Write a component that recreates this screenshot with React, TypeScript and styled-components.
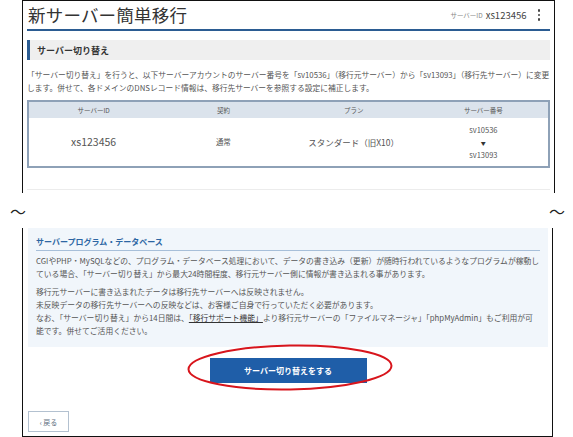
import styled, { createGlobalStyle } from 'styled-components';

const GlobalStyle = createGlobalStyle`
	html, body {
		margin: 0;
		padding: 0;
		background: #fff;
	}
	body {
		font-family: "Noto Sans CJK JP", "Noto Sans", sans-serif;
		color: #444;
	}
`;

const Page = styled.div`
	width: 573px;
	height: 437px;
	display: flex;
	flex-direction: column;
	overflow: hidden;
`;

const TopFrame = styled.section`
	margin: 0 18px 0 22px;
	border: 1px solid #111;
	border-bottom: none;
	padding: 0 4px 3px 4px;
`;

const Header = styled.header`
	height: 28px;
	display: flex;
	align-items: center;
	justify-content: space-between;
	border-bottom: 2px solid #2b5c92;
	padding: 0 10px 0 1px;
`;

const Title = styled.h1`
	margin: 0 0 1px;
	font-size: 17.5px;
	font-weight: 400;
	color: #333;
	letter-spacing: 0.2px;
`;

const Meta = styled.div`
	display: flex;
	align-items: center;
	gap: 3px;
`;

const MetaLabel = styled.span`
	font-size: 6.5px;
	color: #888;
`;

const MetaValue = styled.span`
	font-size: 9.5px;
	color: #444;
	margin-right: 8px;
`;

const Kebab = styled.span`
	display: flex;
	flex-direction: column;
	gap: 2px;
	i {
		width: 2.5px;
		height: 2.5px;
		border-radius: 50%;
		background: #444;
	}
`;

const SectionHead = styled.h2`
	margin: 9px 0 0;
	height: 20px;
	display: flex;
	align-items: center;
	background: #efefef;
	border-left: 3px solid #2b5c92;
	padding-left: 7px;
	font-size: 9px;
	font-weight: 700;
	color: #333;
`;

const Lead = styled.p`
	margin: 8px 0 0;
	font-size: 7.75px;
	line-height: 13px;
	color: #555;
	white-space: nowrap;
`;

const Table = styled.table`
	margin-top: 6px;
	width: 100%;
	border-collapse: collapse;
	border: 2px solid #8ea1b7;
	table-layout: fixed;
	th {
		height: 16px;
		padding: 0;
		background: #dbe3ec;
		font-size: 6.5px;
		font-weight: 400;
		color: #555;
	}
	td {
		height: 48px;
		padding: 0;
		text-align: center;
		color: #555;
	}
`;

const Cell = styled.td<{ $size: number }>`
	font-size: ${(p) => p.$size}px;
	line-height: 12px;
`;

const Arrow = styled.span`
	font-size: 5px;
	color: #333;
`;

const Divider = styled.div`
	margin-top: 21px;
	border-top: 1px solid #ececec;
`;

const CutRow = styled.div`
	height: 35px;
	display: flex;
	align-items: center;
	justify-content: space-between;
	padding: 0 8px 0 10px;
	font-size: 16px;
	color: #222;
`;

const BottomFrame = styled.section`
	flex: 1;
	margin: 0 20px 0 22px;
	border: 1px solid #111;
	border-top: none;
	padding: 0 4px 3px 5px;
	display: flex;
	flex-direction: column;
`;

const InfoBox = styled.div`
	background: #f1f6fb;
	padding: 8px 8px 10px;
`;

const InfoHead = styled.h3`
	margin: 0;
	font-size: 8px;
	line-height: 12px;
	font-weight: 700;
	color: #2d66a3;
	padding-bottom: 2px;
	border-bottom: 1px solid #a7bfd9;
`;

const InfoText = styled.p<{ $gap: number }>`
	margin: ${(p) => p.$gap}px 0 0;
	font-size: 7.8px;
	line-height: 13px;
	color: #555;
	white-space: nowrap;
	a {
		color: #333;
		text-decoration: underline;
	}
`;

const ActionRow = styled.div`
	margin-top: 8px;
	display: flex;
	justify-content: center;
`;

const ButtonWrap = styled.div`
	position: relative;
	width: 157px;
	height: 25px;
`;

const PrimaryButton = styled.button`
	width: 100%;
	height: 100%;
	border: none;
	background: #1f5ea8;
	color: #fff;
	font-family: inherit;
	font-size: 8px;
	font-weight: 700;
	cursor: pointer;
`;

const Ring = styled.svg`
	position: absolute;
	left: -23px;
	top: -11px;
	pointer-events: none;
`;

const BackButton = styled.button`
	margin-top: 31px;
	align-self: flex-start;
	width: 41px;
	height: 21px;
	background: #fff;
	border: 1px solid #b3c1d0;
	font-family: inherit;
	font-size: 7px;
	color: #607080;
	padding: 0;
`;

export default function App() {
	return (
		<>
			<GlobalStyle />
			<Page>
				<TopFrame>
					<Header>
						<Title>新サーバー簡単移行</Title>
						<Meta>
							<MetaLabel>サーバーID</MetaLabel>
							<MetaValue>xs123456</MetaValue>
							<Kebab>
								<i />
								<i />
								<i />
							</Kebab>
						</Meta>
					</Header>
					<SectionHead>サーバー切り替え</SectionHead>
					<Lead>
						「サーバー切り替え」を行うと、以下サーバーアカウントのサーバー番号を「sv10536」（移行元サーバー）から「sv13093」（移行先サーバー）に変更
						<br />
						します。併せて、各ドメインのDNSレコード情報は、移行先サーバーを参照する設定に補正します。
					</Lead>
					<Table>
						<thead>
							<tr>
								<th>サーバーID</th>
								<th>契約</th>
								<th>プラン</th>
								<th>サーバー番号</th>
							</tr>
						</thead>
						<tbody>
							<tr>
								<Cell $size={10.5}>xs123456</Cell>
								<Cell $size={7.5}>通常</Cell>
								<Cell $size={8.5}>スタンダード（旧X10）</Cell>
								<Cell $size={7.5}>
									sv10536
									<br />
									<Arrow>▼</Arrow>
									<br />
									sv13093
								</Cell>
							</tr>
						</tbody>
					</Table>
					<Divider />
				</TopFrame>

				<CutRow>
					<span>〜</span>
					<span>〜</span>
				</CutRow>

				<BottomFrame>
					<InfoBox>
						<InfoHead>サーバープログラム・データベース</InfoHead>
						<InfoText $gap={3}>
							CGIやPHP・MySQLなどの、プログラム・データベース処理において、データの書き込み（更新）が随時行われているようなプログラムが稼動し
							<br />
							ている場合、「サーバー切り替え」から最大24時間程度、移行元サーバー側に情報が書き込まれる事があります。
						</InfoText>
						<InfoText $gap={5}>
							移行元サーバーに書き込まれたデータは移行先サーバーへは反映されません。
							<br />
							未反映データの移行先サーバーへの反映などは、お客様ご自身で行っていただく必要があります。
							<br />
							なお、「サーバー切り替え」から14日間は、<a href="#">「移行サポート機能」</a>より移行元サーバーの「ファイルマネージャ」「phpMyAdmin」もご利用が可
							<br />
							能です。併せてご活用ください。
						</InfoText>
					</InfoBox>
					<ActionRow>
						<ButtonWrap>
							<PrimaryButton>サーバー切り替えをする</PrimaryButton>
							<Ring width="206" height="47" viewBox="0 0 206 47">
								<ellipse
									cx="103"
									cy="23.5"
									rx="101.5"
									ry="22"
									fill="none"
									stroke="#d8151c"
									strokeWidth="2"
									transform="rotate(-1 103 23.5)"
								/>
							</Ring>
						</ButtonWrap>
					</ActionRow>
					<BackButton>‹ 戻る</BackButton>
				</BottomFrame>
			</Page>
		</>
	);
}
